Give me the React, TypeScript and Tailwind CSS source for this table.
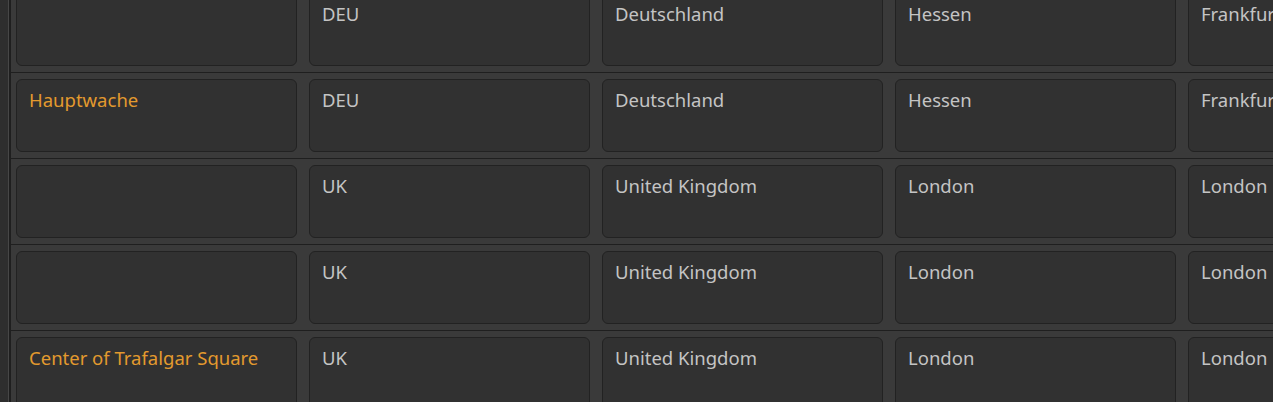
import React from "react";

const rows: string[][] = [
  ["", "DEU", "Deutschland", "Hessen", "Frankfurt"],
  ["Hauptwache", "DEU", "Deutschland", "Hessen", "Frankfurt"],
  ["", "UK", "United Kingdom", "London", "London"],
  ["", "UK", "United Kingdom", "London", "London"],
  ["Center of Trafalgar Square", "UK", "United Kingdom", "London", "London"],
];

export default function App() {
  return (
    <div
      className="w-[1273px] h-[402px] overflow-hidden flex bg-[#2e2e2e]"
      style={{ fontFamily: '"Noto Sans", "Open Sans", sans-serif' }}
    >
      <div className="w-[8px] shrink-0 bg-[#2e2e2e]" />
      <div className="w-[1px] shrink-0 bg-[#474747]" />
      <div className="w-[2px] shrink-0 bg-[#1f1f1f]" />
      <div className="flex-1 bg-[#3a3a3a] overflow-hidden">
        <div className="-mt-[13px] flex flex-col">
          {rows.map((r, i) => (
            <div key={i} className="flex gap-[12px] pl-[5px] pt-[6px] pb-[6px] border-b border-[#1f1f1f] w-[1500px]">
              {r.map((c, j) => (
                <div
                  key={j}
                  className="w-[281px] h-[73px] shrink-0 rounded-[6px] bg-[#313131] border border-[#222222] px-[12px] pt-[7px] text-[18.5px] leading-[26px]"
                >
                  <span className={j === 0 ? "text-[#e39a2e]" : "text-[#c4c4c4]"}>{c}</span>
                </div>
              ))}
            </div>
          ))}
        </div>
      </div>
    </div>
  );
}
